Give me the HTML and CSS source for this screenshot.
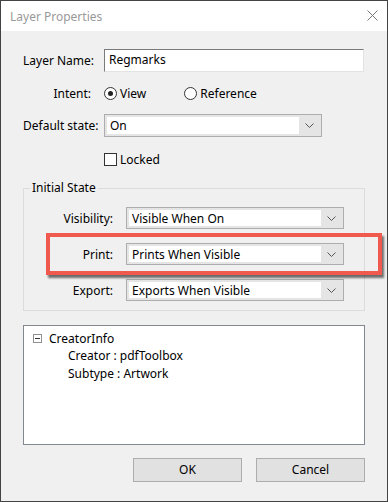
FILE: index.html
```html
<!DOCTYPE html>
<html lang="en">

<head>
    <meta charset="UTF-8">
    <link rel="stylesheet" href="styles.css">
    <title>Layer Properties</title>
</head>

<body>
    <div class="window">
        <div class="titlebar">
            <span class="title">Layer Properties</span>
            <svg class="close" width="11" height="11" viewBox="0 0 11 11">
                <path d="M0.5 0.5 L10.5 10.5 M10.5 0.5 L0.5 10.5" stroke="#777" stroke-width="1" fill="none" />
            </svg>
        </div>

        <div class="content">
            <div class="row first">
                <label class="label">Layer Name:</label>
                <div class="textbox">Regmarks</div>
            </div>

            <div class="row intent">
                <label class="label">Intent:</label>
                <div class="radio checked"></div>
                <span class="opt">View</span>
                <div class="radio second"></div>
                <span class="opt">Reference</span>
            </div>

            <div class="row state">
                <label class="label">Default state:</label>
                <div class="select">
                    <span class="value">On</span>
                    <span class="arrow">
                        <svg width="9" height="5" viewBox="0 0 9 5"><path d="M0.5 0.5 L4.5 4.5 L8.5 0.5" stroke="#555" fill="none" /></svg>
                    </span>
                </div>
            </div>

            <div class="row locked">
                <span class="label"></span>
                <div class="checkbox"></div>
                <span class="opt">Locked</span>
            </div>

            <fieldset class="group">
                <legend>Initial State</legend>
                <div class="row grow g1">
                    <label class="label">Visibility:</label>
                    <div class="select">
                        <span class="value">Visible When On</span>
                        <span class="arrow">
                            <svg width="9" height="5" viewBox="0 0 9 5"><path d="M0.5 0.5 L4.5 4.5 L8.5 0.5" stroke="#555" fill="none" /></svg>
                        </span>
                    </div>
                </div>
                <div class="row grow">
                    <label class="label">Print:</label>
                    <div class="select">
                        <span class="value">Prints When Visible</span>
                        <span class="arrow">
                            <svg width="9" height="5" viewBox="0 0 9 5"><path d="M0.5 0.5 L4.5 4.5 L8.5 0.5" stroke="#555" fill="none" /></svg>
                        </span>
                    </div>
                </div>
                <div class="row grow">
                    <label class="label">Export:</label>
                    <div class="select">
                        <span class="value">Exports When Visible</span>
                        <span class="arrow">
                            <svg width="9" height="5" viewBox="0 0 9 5"><path d="M0.5 0.5 L4.5 4.5 L8.5 0.5" stroke="#555" fill="none" /></svg>
                        </span>
                    </div>
                </div>
            </fieldset>

            <div class="tree">
                <div class="node">
                    <svg class="minus" width="9" height="9" viewBox="0 0 9 9">
                        <rect x="0.5" y="0.5" width="8" height="8" fill="#fff" stroke="#919191" />
                        <path d="M2 4.5 H7" stroke="#333" />
                    </svg>
                    <span>CreatorInfo</span>
                </div>
                <div class="leaf">Creator : pdfToolbox</div>
                <div class="leaf">Subtype : Artwork</div>
            </div>

            <div class="buttons">
                <div class="btn">OK</div>
                <div class="btn">Cancel</div>
            </div>
        </div>

        <!-- annotation drawn over the dialog -->
        <div class="highlight"></div>
    </div>
</body>

</html>
```

FILE: styles.css
```css
* {
    box-sizing: border-box;
    font-family: 'Noto Sans', sans-serif;
}

body {
    margin: 0;
    background-color: #fff;
}

.window {
    position: relative;
    width: 388px;
    height: 502px;
    border: 1px solid #434343;
    background-color: #f0f0f0;
    font-size: 12px;
    color: #000;
}

.titlebar {
    display: flex;
    justify-content: space-between;
    align-items: center;
    height: 30px;
    padding: 0 9px 0 9px;
    background-color: #fff;
}

.title {
    color: #999;
    font-size: 12px;
}

.close {
    margin-top: -1px;
}

.content {
    padding: 18px 22px 0 22px;
}

.row {
    display: flex;
    align-items: center;
}

.label {
    width: 68px;
    margin-right: 13px;
    text-align: right;
    white-space: nowrap;
}

.textbox {
    width: 260px;
    height: 23px;
    line-height: 20px;
    padding-left: 4px;
    background-color: #fff;
    border-top: 1px solid #7a7a7a;
    border-left: 1px solid #7a7a7a;
    border-bottom: 1px solid #e3e3e3;
    border-right: 1px solid #e3e3e3;
}

.intent {
    height: 22px;
    margin-top: 10px;
}

.radio, .checkbox {
    width: 13px;
    height: 13px;
    border: 1px solid #333;
    background-color: #fff;
    flex-shrink: 0;
}

.radio {
    border-radius: 50%;
    position: relative;
}

.radio.checked::after {
    content: '';
    position: absolute;
    left: 3px;
    top: 3px;
    width: 5px;
    height: 5px;
    border-radius: 50%;
    background-color: #222;
}

.radio.second {
    margin-left: 38px;
}

.opt {
    margin-left: 3px;
}

.state {
    margin-top: 10px;
}

.select {
    display: flex;
    width: 218px;
    height: 23px;
    padding: 2px 2px 2px 2px;
    border: 1px solid #adadad;
    background-color: #e5e5e5;
}

.select .value {
    flex: 1;
    background-color: #fff;
    line-height: 17px;
    padding-left: 3px;
}

.arrow {
    width: 20px;
    display: flex;
    justify-content: center;
    align-items: center;
}

.locked {
    height: 20px;
    margin-top: 12px;
}

.group {
    margin: 11px 0 0 0;
    padding: 0 0 9px 0;
    border: 1px solid #dcdcdc;
    min-width: 0;
}

.group legend {
    margin-left: 6px;
    padding: 0 2px;
    line-height: 16px;
}

.group .label {
    margin-left: 21px;
}

.grow {
    margin-top: 14px;
}

.grow.g1 {
    margin-top: 11px;
}

.grow .select {
    height: 22px;
}

.tree {
    height: 120px;
    margin-top: 14px;
    padding: 3px 0 0 9px;
    border: 1px solid #828790;
    background-color: #fff;
}

.node {
    display: flex;
    align-items: center;
    height: 18px;
}

.minus {
    margin-right: 7px;
}

.leaf {
    height: 18px;
    line-height: 18px;
    padding-left: 35px;
}

.buttons {
    display: flex;
    justify-content: flex-end;
    gap: 14px;
    margin-top: 13px;
}

.btn {
    width: 109px;
    height: 24px;
    line-height: 22px;
    text-align: center;
    border: 1px solid #adadad;
    background-color: #e1e1e1;
}

.highlight {
    position: absolute;
    left: 45px;
    top: 232px;
    width: 336px;
    height: 42px;
    border: 4px solid #f05a4e;
    box-shadow: 2px 3px 2px rgba(0, 0, 0, 0.55);
}
```
